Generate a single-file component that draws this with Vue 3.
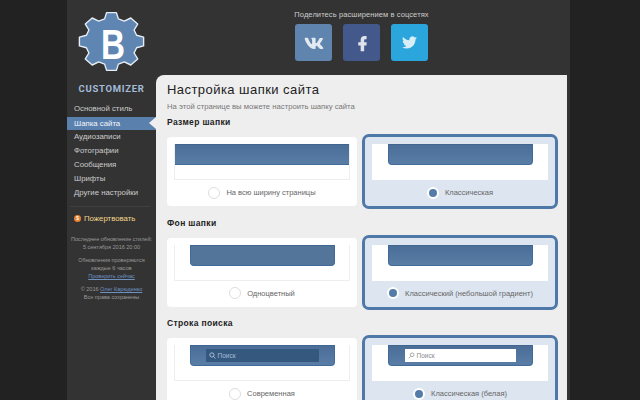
<script setup>
const menu = ['Основной стиль', 'Шапка сайта', 'Аудиозаписи', 'Фотографии', 'Сообщения', 'Шрифты', 'Другие настройки']

const sections = [
  {
    title: 'Размер шапки',
    options: [
      { label: 'На всю ширину страницы', bar: 'wide' },
      { label: 'Классическая', bar: 'narrow', active: true }
    ]
  },
  {
    title: 'Фон шапки',
    options: [
      { label: 'Одноцветный', bar: 'narrow flat' },
      { label: 'Классический (небольшой градиент)', bar: 'narrow', active: true }
    ]
  },
  {
    title: 'Строка поиска',
    options: [
      { label: 'Современная', bar: 'narrow', search: 'modern' },
      { label: 'Классическая (белая)', bar: 'narrow', search: 'white', active: true }
    ]
  }
]

// зубчатое колесо логотипа, по высоте чуть сжато
const gear = (() => {
  const cx = 39.5, cy = 39.5, pts = []
  for (let i = 0; i < 8; i++) {
    const a = (i * Math.PI) / 4 - Math.PI / 2
    const p = (r, d) => {
      const x = cx + r * Math.cos(a + d)
      const y = cy + r * 0.9 * Math.sin(a + d)
      pts.push(x.toFixed(1) + ',' + y.toFixed(1))
    }
    p(26, -0.27)
    p(32.5, -0.15)
    p(32.5, 0.15)
    p(26, 0.27)
  }
  return pts.join(' ')
})()
</script>

<template>
  <div class="page">
    <aside class="sidebar">
      <div class="logo">
        <svg class="gear" width="80" height="80" viewBox="0 0 80 80">
          <polygon :points="gear" fill="#5f86b3" stroke="#e6edf5" stroke-width="1.4" stroke-linejoin="round" />
          <text x="29" y="57" textLength="24" lengthAdjust="spacingAndGlyphs" class="gearB">B</text>
        </svg>
        <div class="logoText">CUSTOMIZER</div>
      </div>
      <nav class="menu">
        <div v-for="(item, i) in menu" :key="item" class="menuItem" :class="{ current: i === 1 }">{{ item }}</div>
      </nav>
      <div class="divider"></div>
      <div class="donate">
        <span class="coin">$</span>
        <span>Пожертвовать</span>
      </div>
      <div class="info">
        <p>Последнее обновление стилей:<br />5 сентября 2016 20:00</p>
        <p>Обновления проверяются<br />каждые 6 часов<br /><a>Проверить сейчас</a></p>
        <p>© 2016 <a>Олег Карюденко</a><br />Все права сохранены</p>
      </div>
    </aside>

    <div class="right">
      <header class="share">
        <div class="shareTitle">Поделитесь расширением в соцсетях</div>
        <div class="shareButtons">
          <div class="btn vk">
            <svg width="28" height="28" viewBox="0 0 24 24" fill="#e3e9f0"><path d="M19.376 17.123h-1.744c-.66 0-.864-.525-2.05-1.727-1.033-1-1.49-1.135-1.744-1.135-.356 0-.458.102-.458.593v1.575c0 .424-.135.678-1.253.678-1.846 0-3.896-1.118-5.335-3.202C4.624 10.857 4.03 8.57 4.03 8.096c0-.254.102-.491.593-.491h1.744c.44 0 .61.203.78.677.863 2.49 2.303 4.675 2.896 4.675.22 0 .322-.102.322-.66V9.721c-.068-1.186-.695-1.287-.695-1.71 0-.204.17-.407.44-.407h2.744c.373 0 .508.203.508.643v3.473c0 .372.17.508.271.508.22 0 .407-.136.813-.542 1.254-1.406 2.151-3.574 2.151-3.574.119-.254.322-.491.763-.491h1.744c.525 0 .644.27.525.643-.22 1.017-2.354 4.031-2.354 4.031-.186.305-.254.44 0 .78.186.254.796.779 1.203 1.253.745.847 1.32 1.558 1.473 2.05.17.49-.085.744-.576.744z" /></svg>
          </div>
          <div class="btn fb">
            <svg width="20" height="20" viewBox="0 0 24 24" fill="#dfe3ea"><path d="M15 7.5h2.5V3.500H15c-2.900 0-4.600 2-4.600 4.600V11H7.500v4h2.900v7h4.200v-7h2.700l.4-4h-3.100V8.500c0-.6.400-1 1-1z" /></svg>
          </div>
          <div class="btn tw">
            <svg width="15" height="15" viewBox="0 0 24 24" fill="#d9edf6"><path d="M23.953 4.57a10 10 0 01-2.825.775 4.958 4.958 0 002.163-2.723c-.951.555-2.005.959-3.127 1.184a4.92 4.92 0 00-8.384 4.482C7.69 8.095 4.067 6.13 1.64 3.162a4.822 4.822 0 00-.666 2.475c0 1.71.87 3.213 2.188 4.096a4.904 4.904 0 01-2.228-.616v.06a4.923 4.923 0 003.946 4.827 4.996 4.996 0 01-2.212.085 4.936 4.936 0 004.604 3.417 9.867 9.867 0 01-6.102 2.105c-.39 0-.779-.023-1.17-.067a13.995 13.995 0 007.557 2.209c9.053 0 13.998-7.496 13.998-13.985 0-.21 0-.42-.015-.63A9.935 9.935 0 0024 4.59z" /></svg>
          </div>
        </div>
      </header>

      <main class="panel">
        <h1>Настройка шапки сайта</h1>
        <div class="subtitle">На этой странице вы можете настроить шапку сайта</div>
        <section v-for="s in sections" :key="s.title" class="section">
          <h2>{{ s.title }}</h2>
          <div class="options">
            <div v-for="o in s.options" :key="o.label" class="option" :class="{ active: o.active }">
              <div class="preview">
                <div class="bar" :class="o.bar">
                  <div v-if="o.search" class="search" :class="o.search">
                    <svg width="7" height="7" viewBox="0 0 10 10" fill="none" stroke="currentColor" stroke-width="1.4">
                      <circle v-if="o.search === 'modern'" cx="4.2" cy="4.2" r="3" />
                      <path v-if="o.search === 'modern'" d="M6.5 6.5L9.2 9.2" />
                      <circle v-if="o.search === 'white'" cx="6" cy="4" r="2.6" stroke-width="1" />
                      <path v-if="o.search === 'white'" d="M4 6L1 9" stroke-width="1" />
                    </svg>
                    <span>Поиск</span>
                  </div>
                </div>
              </div>
              <div class="label">
                <span class="radio"></span>
                <span>{{ o.label }}</span>
              </div>
            </div>
          </div>
        </section>
      </main>
    </div>
  </div>
</template>

<style>
html, body {
  margin: 0;
  height: 100%;
  overflow: hidden;
  background: #222;
}
</style>

<style scoped>
.page {
  display: flex;
  width: 503px;
  height: 400px;
  margin-left: 67px;
  background: #333;
  font-family: "Liberation Sans", Arial, sans-serif;
  overflow: hidden;
}

.sidebar {
  width: 89px;
  flex: none;
}

.logo {
  height: 102px;
  display: flex;
  flex-direction: column;
  align-items: center;
}

.gear {
  margin-top: 2px;
}

.gearB {
  font-family: "Liberation Sans", sans-serif;
  font-weight: 700;
  font-size: 42px;
  fill: #fff;
}

.logoText {
  margin-top: 1px;
  font-family: Roboto, sans-serif;
  font-weight: 700;
  font-size: 9.5px;
  letter-spacing: 0.7px;
  color: #a3bcd9;
}

.menuItem {
  height: 14px;
  line-height: 14px;
  padding-left: 7px;
  font-size: 7.8px;
  white-space: nowrap;
  color: #ccc;
  position: relative;
}

.menuItem.current {
  height: 13px;
  line-height: 13px;
  margin: 1px 0 0 -1px;
  padding-left: 8px;
  background: #5a80ad;
  color: #f4f7fb;
}

.menuItem.current::after {
  content: '';
  position: absolute;
  right: 0;
  top: 0;
  border-style: solid;
  border-width: 6.5px 7px 6.5px 0;
  border-color: transparent #eee transparent transparent;
}

.divider {
  height: 1px;
  margin: 6px 6px 0 3px;
  background: #3f3f3f;
}

.donate {
  display: flex;
  align-items: center;
  gap: 3px;
  margin: 4px 0 0 7px;
  height: 14px;
  font-size: 7.8px;
  color: #f3d58b;
}

.coin {
  width: 7px;
  height: 7px;
  border-radius: 50%;
  background: #e8802c;
  color: #fff;
  font-size: 5.5px;
  line-height: 7px;
  text-align: center;
}

.info {
  margin-top: 10px;
  text-align: center;
  font-size: 5.5px;
  line-height: 8px;
  color: #9a9a9a;
}

.info p {
  margin: 0 0 5px;
}

.info a {
  color: #6d92c2;
  text-decoration: underline;
}

.right {
  flex: 1;
  min-width: 0;
  display: flex;
  flex-direction: column;
}

.share {
  height: 75px;
  flex: none;
  padding-right: 3px;
  display: flex;
  flex-direction: column;
  align-items: center;
  box-sizing: border-box;
  padding-top: 9px;
}

.shareTitle {
  font-size: 7.5px;
  line-height: 11px;
  letter-spacing: 0.1px;
  color: #ccc;
}

.shareButtons {
  display: flex;
  gap: 11px;
  margin-top: 4px;
}

.btn {
  width: 37px;
  height: 37px;
  border-radius: 3px;
  display: flex;
  align-items: center;
  justify-content: center;
}

.vk { background: #5f84ae; }
.fb { background: #44598b; }
.tw { background: #2ba6dc; }

.panel {
  flex: 1;
  margin-right: 3px;
  padding: 7px 8px 0 8px;
  background: #eee;
  border-radius: 8px 0 0 0;
}

h1 {
  margin: 0 0 0 3px;
  font-size: 13px;
  line-height: 16px;
  font-weight: 400;
  letter-spacing: 0.45px;
  color: #222;
}

.subtitle {
  margin: 3px 0 0 3px;
  font-size: 7.7px;
  line-height: 11px;
  color: #777;
}

.section {
  margin-top: 5px;
}

.section + .section {
  margin-top: 8.5px;
}

h2 {
  margin: 0 0 0 3px;
  height: 17px;
  font-size: 8.5px;
  line-height: 11px;
  font-weight: 700;
  letter-spacing: 0.35px;
  color: #222;
}

.options {
  display: grid;
  grid-template-columns: 196px 196px;
  gap: 2px;
}

.option {
  height: 75px;
  box-sizing: border-box;
  border: 3px solid transparent;
  border-radius: 7px;
  background: #fff;
  background-clip: padding-box;
  padding-top: 7px;
}

.option.active {
  border-color: #4d78a8;
  background: #dde5f0;
  background-clip: border-box;
}

.preview {
  height: 36px;
  margin: 0 7px;
  box-sizing: border-box;
  border: 1px solid #eee;
  border-top: 0;
  background: #fff;
  display: flex;
  justify-content: center;
  align-items: flex-start;
}

.active .preview {
  border: 0;
}

.bar {
  height: 21px;
  box-sizing: border-box;
  border: 1px solid #3f6a99;
  border-top-color: #3f6590;
  background: linear-gradient(#4a6e98, #5a7da6);
  display: flex;
  align-items: center;
  justify-content: center;
}

.bar.wide {
  width: 100%;
  border-width: 1px 0;
}

.bar.narrow {
  width: 145px;
  border-radius: 0 0 4px 4px;
}

.bar.flat {
  background: #537599;
}

.search {
  display: flex;
  align-items: center;
  gap: 2px;
  box-sizing: border-box;
  height: 12.5px;
  padding-left: 3px;
  font-size: 6.5px;
}

.search.modern {
  width: 113px;
  background: #35587f;
  color: #a8bdd6;
}

.search.white {
  width: 111px;
  background: #fff;
  color: #8a8a8a;
}

.label {
  height: 25px;
  display: flex;
  align-items: center;
  justify-content: center;
  gap: 6px;
  font-size: 7.5px;
  color: #666;
}

.radio {
  width: 12px;
  height: 12px;
  flex: none;
  box-sizing: border-box;
  border: 1px solid #ddd;
  border-radius: 50%;
  background: #fff;
}

.active .radio {
  border: 2px solid #fff;
  background: #557ba8;
}
</style>
